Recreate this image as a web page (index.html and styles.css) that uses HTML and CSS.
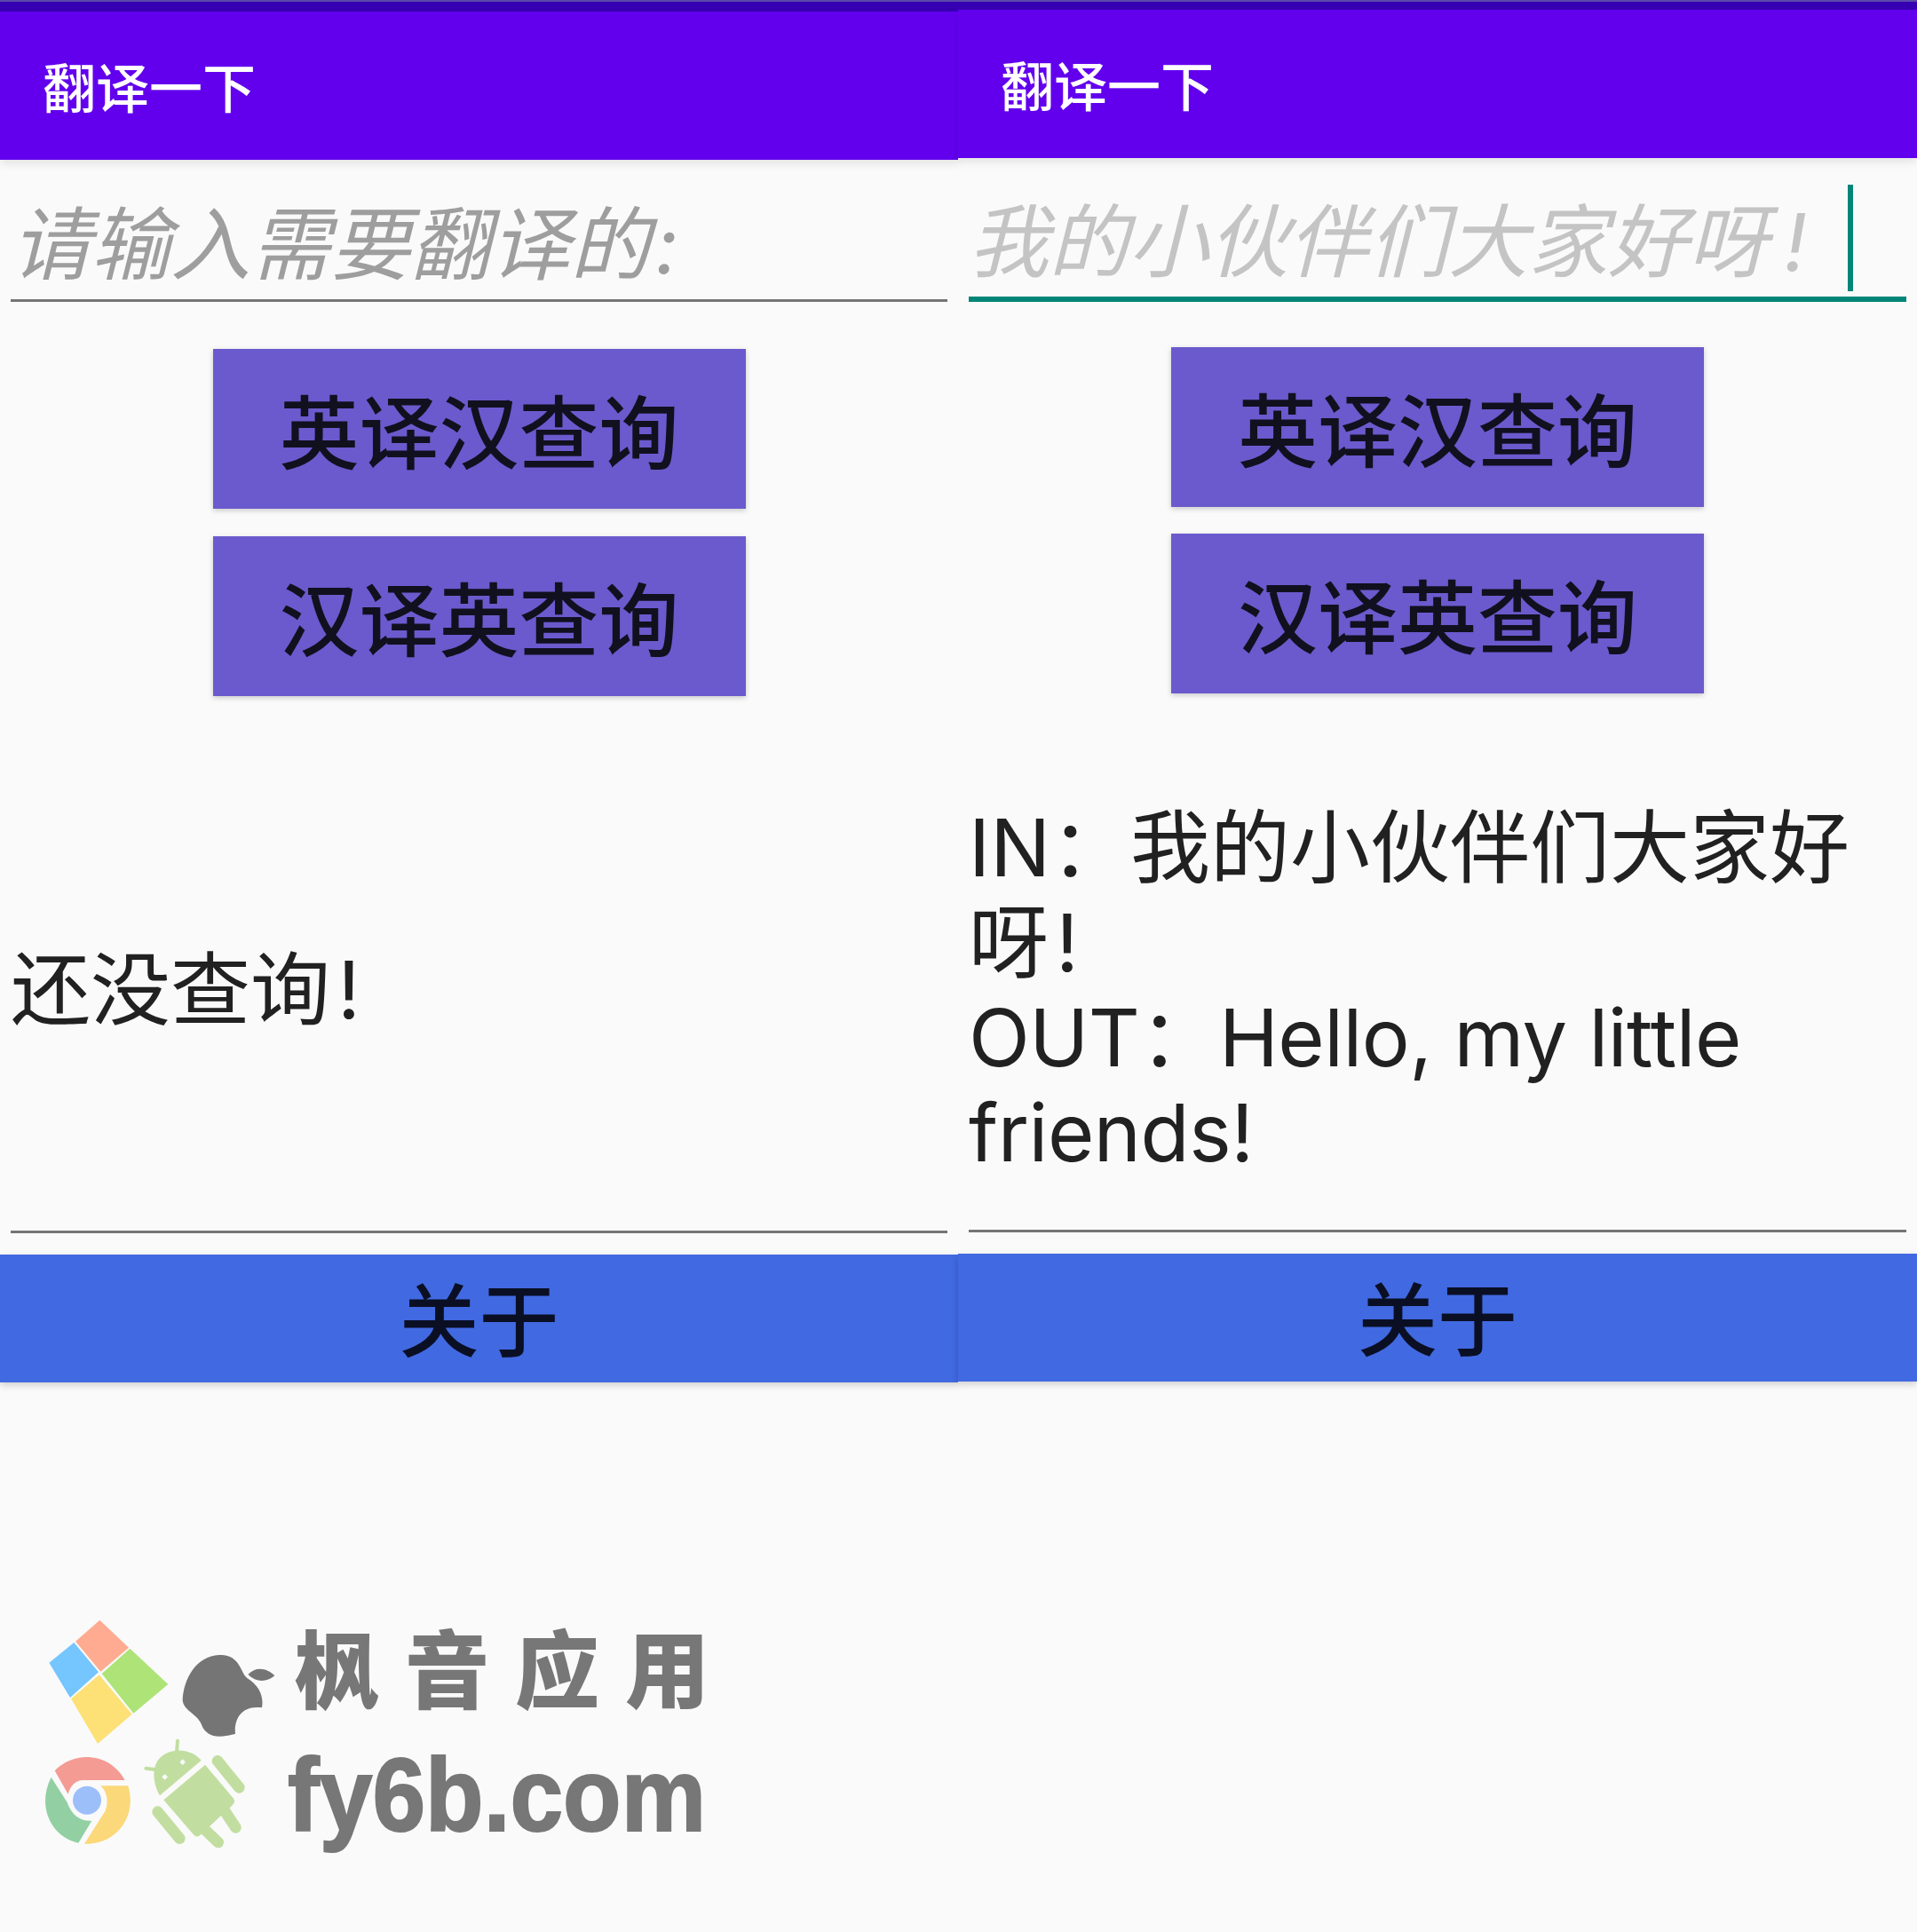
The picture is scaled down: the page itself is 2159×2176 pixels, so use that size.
FILE: index.html
```html
<!DOCTYPE html>
<html lang="zh-CN">
<head>
<meta charset="utf-8">
<title>翻译一下</title>
<link rel="stylesheet" href="styles.css">
</head>
<body>
<div class="page">
  <section class="panel panel-idle">
    <div class="status"></div>
    <header class="toolbar">翻译一下</header>
    <div class="field"><span class="hint">请输入需要翻译的<span class="colon">:</span></span></div>
    <div class="actions">
      <div class="btn">英译汉查询</div>
      <div class="btn">汉译英查询</div>
    </div>
    <div class="result"><p>还没查询<span class="bang">!</span></p></div>
    <div class="about">关于</div>
  </section>
  <section class="panel panel-active">
    <div class="status"></div>
    <header class="toolbar">翻译一下</header>
    <div class="field"><span class="hint">我的小伙伴们大家好呀<span class="hint-bang">!</span></span><i class="cursor"></i></div>
    <div class="actions">
      <div class="btn">英译汉查询</div>
      <div class="btn">汉译英查询</div>
    </div>
    <div class="result"><p>IN：我的小伙伴们大家好呀<span class="bang">!</span></p><p class="latin">OUT：Hello, my little friends!</p></div>
    <div class="about">关于</div>
  </section>
  <div class="mark">
    <svg class="mark-icons" viewBox="0 0 900 870" aria-hidden="true">
      <polygon fill="#FFAB91" points="247,44 345,137 250,218 165,116"/>
      <polygon fill="#75C5FF" points="160,120 243,220 147,306 76,188"/>
      <polygon fill="#AEE477" points="349,140 478,261 361,359 254,225"/>
      <polygon fill="#FDE177" points="245,229 356,362 240,462 150,310"/>
      <path fill="#757575" d="M745,240 C722,222 722,160 650,162 C575,165 530,240 527,315 C530,350 575,360 590,395 C600,425 625,437 650,437 C670,437 690,432 705,428 C700,380 725,330 795,340 C802,300 785,265 745,240 Z"/>
      <path fill="#757575" d="M748,228 C775,200 810,205 838,232 C810,255 775,255 748,228 Z"/>
      <circle fill="#9DBFF9" cx="204" cy="653" r="48"/>
      <path fill="#F49B94" d="M95,553 C160,485 280,490 332,585 L190,585 C165,585 147,605 140,632 Z"/>
      <path fill="#92D0A4" d="M83,575 L137,660 C150,700 180,725 220,722 L175,797 C90,780 30,680 83,575 Z"/>
      <path fill="#FBD87A" d="M250,604 L343,604 C375,710 300,805 195,800 L265,690 C278,660 272,625 250,604 Z"/>
      <g fill="#C1DEA0" stroke="none">
        <path d="M590,518 C560,480 490,470 450,510 C422,540 425,595 450,637 Z"/>
        <path d="M603,533 L700,648 Q706,660 695,670 L585,772 Q575,780 565,770 L463,652 Z"/>
      </g>
      <g fill="none" stroke="#C1DEA0" stroke-linecap="round">
        <path stroke-width="12" d="M510,452 L507,490 M403,545 L440,550"/>
        <path stroke-width="38" d="M645,520 L718,610 M443,692 L517,782 M670,690 L706,745 M600,750 L647,795"/>
      </g>
      <rect fill="#FAFAFA" x="520" y="517" width="14" height="14" transform="rotate(45 527 524)"/>
      <rect fill="#FAFAFA" x="460" y="567" width="14" height="14" transform="rotate(45 467 574)"/>
    </svg>
    <div class="mark-zh">枫音应用</div>
    <div class="mark-en">fy6b.com</div>
  </div>
</div>
</body>
</html>
```
FILE: styles.css
```css
* { box-sizing: border-box; }
html, body { margin: 0; padding: 0; }
body {
  background: #fafafa;
  font-family: Inter, "Noto Sans CJK SC", sans-serif;
  color: #212121;
}
.page {
  position: relative;
  display: flex;
  width: 2159px;
  height: 2176px;
  overflow: hidden;
}
.panel { display: flex; flex-direction: column; flex: none; }
.panel-idle { width: 1079px; }
.panel-active { width: 1080px; }
.status { background: #3700b3; border-top: 2px solid #5a4aa8; flex: none; }
.panel-idle .status { height: 13px; }
.panel-active .status { height: 11px; }
.toolbar {
  height: 167px;
  background: #6200ee;
  color: #fff;
  font-size: 60px;
  font-weight: 500;
  line-height: 60px;
  padding: 57px 0 0 48px;
  box-shadow: 0 4px 10px rgba(0,0,0,.1);
  position: relative;
  flex: none;
}
.field {
  position: relative;
  margin: 0 12px;
  padding: 34px 0 0 0;
  display: flex;
  align-items: center;
  font-size: 90px;
  font-style: italic;
  flex: none;
}
.panel-idle .field { height: 160px; border-bottom: 3px solid #757575; color: #9e9e9e; }
.panel-active .field { height: 162px; border-bottom: 6px solid #008577; color: #c4c4c4; }
.hint { line-height: 120px; }
.colon { margin-left: 6px; }
.hint-bang { margin-left: 18px; }
.cursor {
  position: absolute;
  left: 990px;
  top: 30px;
  width: 6px;
  height: 120px;
  background: #008577;
}
.actions { display: flex; flex-direction: column; align-items: center; flex: none; }
.panel-idle .actions { gap: 31px; margin-top: 53px; }
.panel-active .actions { gap: 30px; margin-top: 51px; }
.btn {
  width: 600px;
  height: 180px;
  padding-top: 11px;
  background: #6a5acd;
  color: #11101f;
  font-size: 90px;
  font-weight: 500;
  line-height: 169px;
  text-align: center;
  box-shadow: 0 2px 6px rgba(0,0,0,.2);
}
.result {
  margin: 0 12px;
  border-bottom: 3px solid #757575;
  display: flex;
  flex-direction: column;
  justify-content: center;
  font-size: 90px;
  line-height: 107px;
  flex: none;
}
.panel-idle .result { height: 605px; padding-top: 58px; }
.panel-active .result { height: 607px; padding-top: 64px; }
.result p { margin: 0; }
.result .latin { letter-spacing: -.5px; }
.bang { margin-left: 8px; }
.about {
  height: 144px;
  margin-top: 24px;
  padding-top: 8px;
  background: #4169e1;
  color: #0a0f24;
  font-size: 90px;
  font-weight: 500;
  line-height: 136px;
  text-align: center;
  box-shadow: 0 3px 8px rgba(0,0,0,.18);
  flex: none;
}
.mark { position: absolute; left: 0; top: 0; }
.mark-icons { position: absolute; left: 30px; top: 1810px; width: 300px; height: 290px; }
.mark-zh {
  position: absolute;
  left: 332px;
  top: 1818px;
  font-size: 95px;
  line-height: 130px;
  letter-spacing: 29px;
  font-weight: 900;
  color: #777;
  white-space: nowrap;
}
.mark-en {
  position: absolute;
  left: 324px;
  top: 1957px;
  font-family: "Liberation Sans", sans-serif;
  font-weight: 700;
  font-size: 116px;
  line-height: 130px;
  color: #777;
  -webkit-text-stroke: 2px #777;
  white-space: nowrap;
  transform: scaleX(.925);
  transform-origin: 0 0;
}
```
